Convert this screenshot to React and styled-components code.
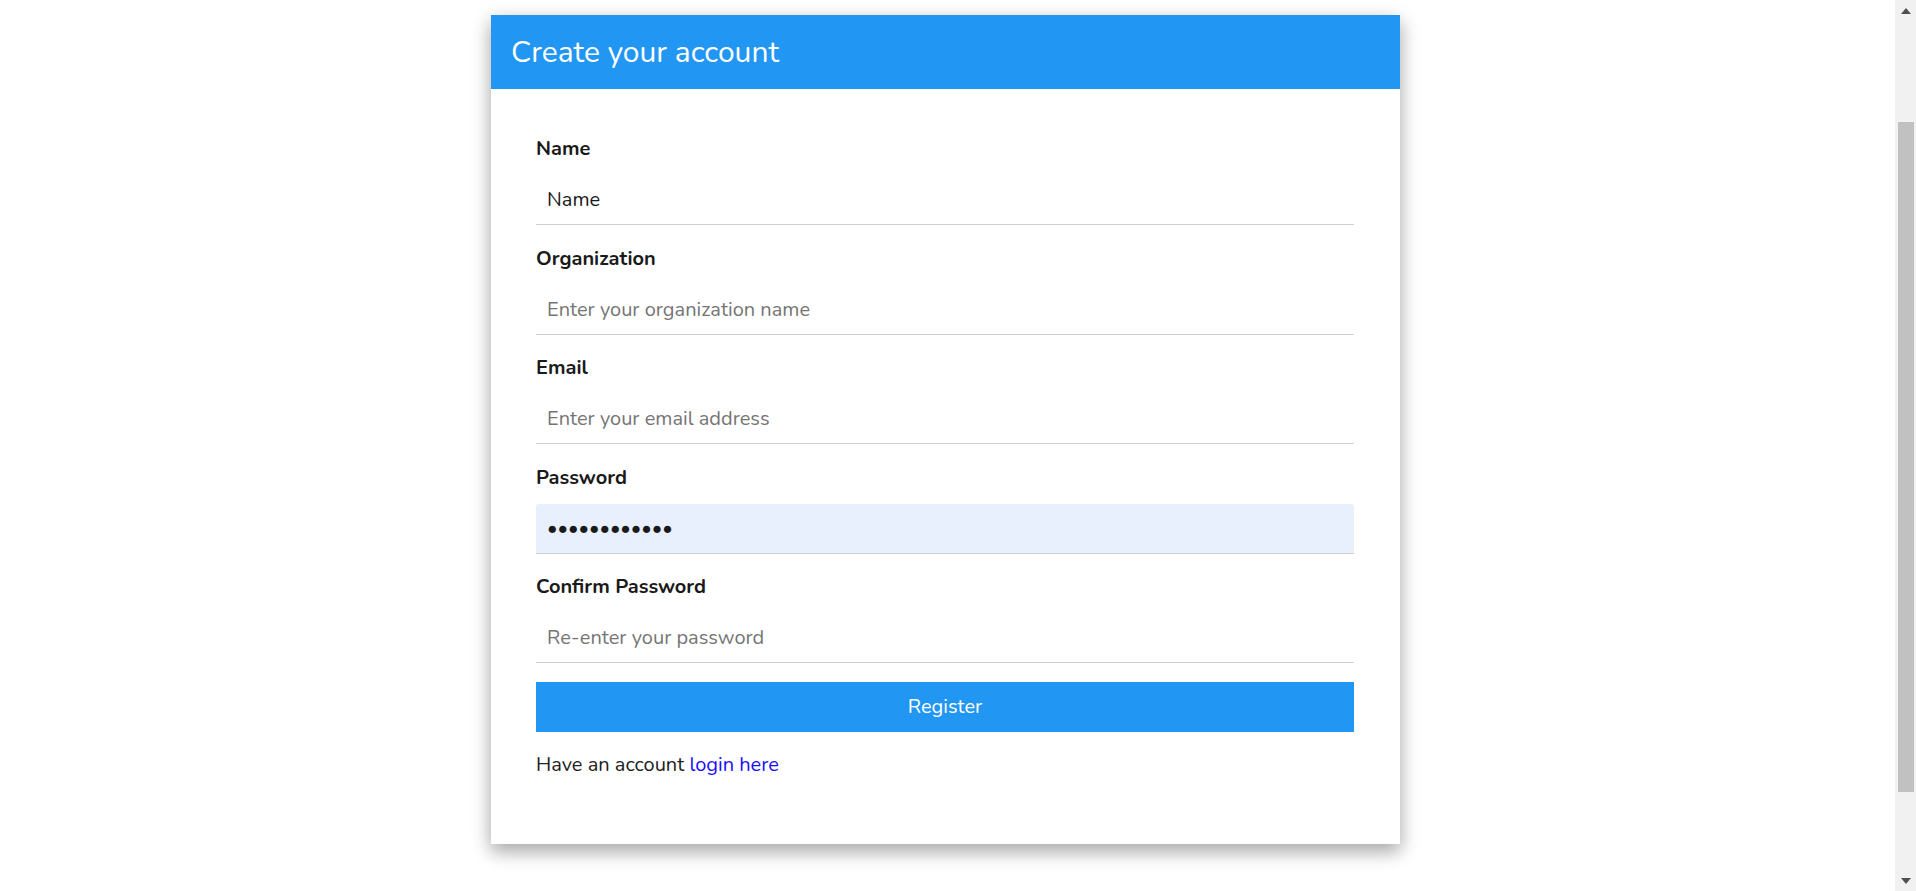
import React from 'react';
import styled, { createGlobalStyle } from 'styled-components';

const GlobalStyle = createGlobalStyle`
  html, body {
    margin: 0;
    padding: 0;
    background: #fff;
    overflow: hidden;
  }
  body {
    font-family: 'Nunito', 'Lato', 'Open Sans', sans-serif;
    color: #212121;
  }
  * {
    box-sizing: border-box;
  }
`;

const Page = styled.div`
  display: flex;
  width: 100%;
  height: 891px;
`;

const Main = styled.main`
  flex: 1;
  padding-right: 4px;
`;

const Card = styled.div`
  width: 909px;
  margin: 15px auto 0;
  background: #fff;
  box-shadow: 0 8px 16px 0 rgba(0, 0, 0, 0.2), 0 6px 20px 0 rgba(0, 0, 0, 0.19);
`;

const Header = styled.div`
  display: flex;
  align-items: center;
  height: 74px;
  padding-left: 20px;
  background-color: #2196f3;
`;

const Title = styled.h1`
  margin: 0;
  font-size: 30px;
  font-weight: 400;
  color: #fff;
`;

const Form = styled.form`
  display: flex;
  flex-direction: column;
  padding: 45px 46px 64px 45px;
`;

const Field = styled.div`
  display: flex;
  flex-direction: column;
  margin-bottom: 18.5px;
`;

const Label = styled.label`
  height: 30px;
  line-height: 30px;
  margin-bottom: 11px;
  font-size: 20px;
  font-weight: 700;
  color: #1a1a1a;
`;

const Input = styled.input`
  height: 50px;
  width: 100%;
  padding: 0 11px;
  border: none;
  border-bottom: 1px solid #cfcfcf;
  border-radius: 3px 3px 0 0;
  outline: none;
  background-color: ${(props) => (props.$filled ? '#e8f0fe' : '#fff')};
  font-family: inherit;
  font-size: 20px;
  color: #1a1a1a;
  ::placeholder {
    color: #777;
  }
`;

const Button = styled.button`
  height: 50px;
  width: 100%;
  border: none;
  background-color: #2196f3;
  color: #fff;
  font-family: inherit;
  font-size: 20px;
  cursor: pointer;
`;

const Footer = styled.p`
  margin: 18px 0 0;
  line-height: 30px;
  font-size: 20px;
  color: #212121;
`;

const Link = styled.a`
  color: #1a0dff;
  text-decoration: none;
`;

const ScrollBar = styled.div`
  display: flex;
  flex-direction: column;
  align-items: center;
  width: 21px;
  height: 891px;
  background-color: #f1f1f1;
`;

const Arrow = styled.div`
  display: flex;
  align-items: center;
  justify-content: center;
  height: 21px;
  width: 21px;
`;

const Track = styled.div`
  flex: 1;
  width: 100%;
  display: flex;
  justify-content: center;
  padding-top: 101px;
  padding-bottom: 78px;
`;

const Thumb = styled.div`
  width: 16px;
  background-color: #c1c1c1;
`;

const fields = [
  { id: 'name', label: 'Name', placeholder: 'Name', value: 'Name' },
  { id: 'org', label: 'Organization', placeholder: 'Enter your organization name' },
  { id: 'email', label: 'Email', placeholder: 'Enter your email address' },
  { id: 'password', label: 'Password', type: 'password', value: 'password1234', filled: true },
  { id: 'confirm', label: 'Confirm Password', type: 'password', placeholder: 'Re-enter your password' },
];

const App = () => {
  return (
    <>
      <GlobalStyle />
      <Page>
        <Main>
          <Card>
            <Header>
              <Title>Create your account</Title>
            </Header>
            <Form onSubmit={(e) => e.preventDefault()}>
              {fields.map((f) => (
                <Field key={f.id}>
                  <Label htmlFor={f.id}>{f.label}</Label>
                  <Input
                    id={f.id}
                    type={f.type || 'text'}
                    placeholder={f.placeholder}
                    defaultValue={f.value}
                    $filled={f.filled}
                  />
                </Field>
              ))}
              <Button type='submit'>Register</Button>
              <Footer>
                Have an account <Link href='#'>login here</Link>
              </Footer>
            </Form>
          </Card>
        </Main>
        <ScrollBar>
          <Arrow>
            <svg width='10' height='6' viewBox='0 0 10 6'>
              <polygon points='5,0 10,6 0,6' fill='#505050' />
            </svg>
          </Arrow>
          <Track>
            <Thumb />
          </Track>
          <Arrow>
            <svg width='10' height='6' viewBox='0 0 10 6'>
              <polygon points='0,0 10,0 5,6' fill='#505050' />
            </svg>
          </Arrow>
        </ScrollBar>
      </Page>
    </>
  );
};

export default App;
